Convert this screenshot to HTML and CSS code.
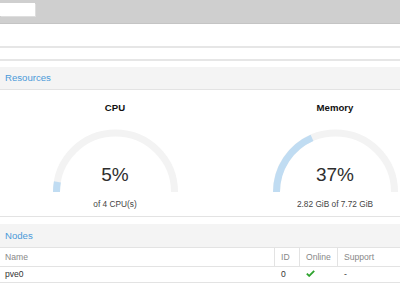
FILE: index.html
```html
<!DOCTYPE html>
<html>
<head>
<meta charset="utf-8">
<link rel="stylesheet" href="styles.css">
</head>
<body>
<div class="topbar"><div class="searchbox"></div></div>
<div class="bar1"></div>
<div class="bar2"></div>

<section class="panel resources">
  <div class="panel-header">Resources</div>
  <div class="gauges">
    <div class="gauge-col">
      <div class="gauge-title">CPU</div>
      <div class="gauge">
        <svg width="125" height="63" viewBox="0 0 125 63">
          <path class="track" d="M3.5 63 A59 59 0 0 1 121.5 63"/>
          <path class="fill" d="M3.5 63 A59 59 0 0 1 4.4 52.8"/>
        </svg>
        <div class="gauge-value">5%</div>
      </div>
      <div class="gauge-sub">of 4 CPU(s)</div>
    </div>
    <div class="gauge-col">
      <div class="gauge-title">Memory</div>
      <div class="gauge">
        <svg width="125" height="63" viewBox="0 0 125 63">
          <path class="track" d="M3.5 63 A59 59 0 0 1 121.5 63"/>
          <path class="fill" d="M3.5 63 A59 59 0 0 1 39.0 8.9"/>
        </svg>
        <div class="gauge-value">37%</div>
      </div>
      <div class="gauge-sub">2.82 GiB of 7.72 GiB</div>
    </div>
  </div>
</section>

<section class="panel nodes">
  <div class="panel-header">Nodes</div>
  <div class="grid">
    <div class="row head">
      <div class="cell c-name">Name</div>
      <div class="cell c-id">ID</div>
      <div class="cell c-online">Online</div>
      <div class="cell c-support">Support</div>
    </div>
    <div class="row">
      <div class="cell c-name">pve0</div>
      <div class="cell c-id">0</div>
      <div class="cell c-online"><svg class="check" width="9" height="7" viewBox="0 0 9 7"><path d="M0.8 3.6 L3.2 5.9 L8.2 0.9" /></svg></div>
      <div class="cell c-support">-</div>
    </div>
  </div>
</section>
</body>
</html>
```

FILE: styles.css
```css
html, body {
  margin: 0;
  padding: 0;
  width: 400px;
  height: 300px;
  overflow: hidden;
  background: #fff;
  font-family: "Liberation Sans", Arial, sans-serif;
}

.topbar {
  background: #cfcfcf;
  border-bottom: 1px solid #c4c4c4;
  padding-top: 3px;
  height: 20px;
}
.searchbox {
  width: 35px;
  height: 13px;
  background: #fff;
  box-shadow: 1px 1px 0 #dedede;
}

.bar1 {
  height: 22px;
  border-bottom: 2px solid #e6e6e6;
}
.bar2 {
  height: 11px;
  border-bottom: 2px solid #e6e6e6;
}

.panel {
  margin-top: 6px;
  overflow: hidden;
}
.panel-header {
  height: 22px;
  line-height: 22px;
  background: #f4f4f4;
  border-bottom: 1px solid #e3e3e3;
  padding-left: 5px;
  font-size: 9.6px;
  color: #4b9ad9;
}

.gauges {
  display: grid;
  grid-template-columns: 220px 175px;
  padding-left: 5px;
  border-bottom: 1px solid #e3e3e3;
  height: 127px;
  box-sizing: border-box;
}
.gauge-col {
  display: flex;
  flex-direction: column;
  align-items: center;
  padding-top: 12px;
  min-width: 220px;
}
.gauge-title {
  font-size: 9.6px;
  font-weight: bold;
  line-height: 12px;
  color: #111;
}
.gauge {
  position: relative;
  margin-top: 15px;
  width: 125px;
  height: 63px;
}
.gauge svg {
  display: block;
}
.track {
  fill: none;
  stroke: #f3f3f3;
  stroke-width: 7;
}
.fill {
  fill: none;
  stroke: #c0dcf2;
  stroke-width: 7;
}
.gauge-value {
  position: absolute;
  left: 0;
  right: 0;
  top: 35px;
  text-align: center;
  font-size: 19px;
  line-height: 22px;
  color: #2e2e2e;
}
.gauge-sub {
  margin-top: 7px;
  font-size: 8.3px;
  line-height: 10px;
  color: #444;
}

.nodes {
  margin-top: 7px;
}
.nodes .panel-header {
  height: 23px;
  line-height: 23px;
}
.row {
  display: flex;
  border-bottom: 1px solid #e3e3e3;
  font-size: 8.6px;
  color: #333;
  height: 15px;
  line-height: 15px;
}
.row.head {
  height: 18px;
  line-height: 18px;
  color: #888;
}
.cell {
  box-sizing: border-box;
  padding-left: 5px;
  white-space: nowrap;
}
.row.head .cell + .cell {
  border-left: 1px solid #e3e3e3;
  padding-left: 6px;
}
.row .cell + .cell {
  border-left: 1px solid transparent;
  padding-left: 6px;
}
.c-name { width: 274px; }
.c-id { width: 25px; }
.c-online { width: 38px; }
.c-support { flex: 1; }
.check {
  display: inline-block;
  vertical-align: middle;
  margin-top: -2px;
}
.check path {
  fill: none;
  stroke: #2ea32e;
  stroke-width: 1.8;
}
```
